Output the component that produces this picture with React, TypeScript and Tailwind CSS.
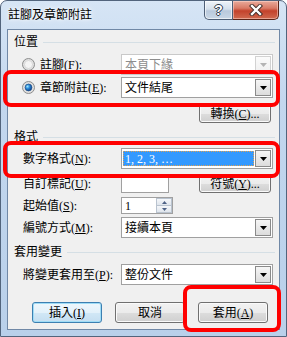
import React from "react";

function Radio({ checked }: { checked: boolean }) {
  return (
    <svg width="13" height="13" viewBox="0 0 13 13" className="shrink-0">
      <defs>
        <radialGradient id="rgOuter" cx="0.5" cy="0.5" r="0.5">
          <stop offset="0%" stopColor="#fcfcfc" />
          <stop offset="70%" stopColor="#e8e8e8" />
          <stop offset="100%" stopColor="#d4d4d4" />
        </radialGradient>
        <radialGradient id="rgDot" cx="0.35" cy="0.35" r="0.7">
          <stop offset="0%" stopColor="#9be7ff" />
          <stop offset="45%" stopColor="#2b8ad8" />
          <stop offset="100%" stopColor="#0b3f86" />
        </radialGradient>
      </defs>
      <circle cx="6.5" cy="6.5" r="6" fill="url(#rgOuter)" stroke="#8e8f8f" strokeWidth="1" />
      <circle cx="6.5" cy="6.5" r="4" fill="#f4f4f4" stroke="#c8c8c8" strokeWidth="0.6" />
      {checked && <circle cx="6.5" cy="6.5" r="3.4" fill="url(#rgDot)" stroke="#1b4a86" strokeWidth="0.7" />}
    </svg>
  );
}

function Arrow({ disabled }: { disabled?: boolean }) {
  return (
    <div
      className={
        "mr-[1px] my-[1px] flex w-[16px] shrink-0 items-center justify-center border " +
        (disabled
          ? "border-[#d2d2d2] bg-[linear-gradient(180deg,#fbfbfb,#f0f0f0)]"
          : "border-[#8a8a8a] bg-[linear-gradient(180deg,#f6f6f6_0%,#e9e9e9_50%,#dcdcdc_100%)]")
      }
    >
      <svg width="7" height="4" viewBox="0 0 7 4">
        <polygon points="0,0 7,0 3.5,4" fill={disabled ? "#b4b4b4" : "#000"} />
      </svg>
    </div>
  );
}

function Combo({
  text,
  disabled,
  selected,
}: {
  text: string;
  disabled?: boolean;
  selected?: boolean;
}) {
  return (
    <div
      className={
        "flex h-full w-[152px] items-stretch border bg-white " +
        (disabled ? "border-[#c9c9c9]" : "border-[#a0a0a0]")
      }
    >
      {selected ? (
        <div className="mx-[1px] my-[2px] flex flex-1 items-center border border-dotted border-[#e0a050] bg-[#3399ff] pl-[1px] text-white font-['Liberation_Serif','Noto_Sans_CJK_TC',serif]">
          {text}
        </div>
      ) : (
        <div
          className={
            "flex flex-1 items-center pl-[3px] " + (disabled ? "text-[#8d8d8d]" : "text-black")
          }
        >
          {text}
        </div>
      )}
      <Arrow disabled={disabled} />
    </div>
  );
}

function Btn({
  children,
  w,
  focused,
}: {
  children: React.ReactNode;
  w: string;
  focused?: boolean;
}) {
  return (
    <div
      className={
        "flex h-full items-center justify-center rounded-[3px] border " +
        w +
        " " +
        (focused
          ? "border-[#3c7fb1] bg-[linear-gradient(180deg,#eef7fc_0%,#e3f1fa_50%,#d2e8f6_50%,#c4def1_100%)] shadow-[inset_0_0_0_1px_#9fdcf6]"
          : "border-[#707070] bg-[linear-gradient(180deg,#f2f2f2_0%,#ebebeb_50%,#dddddd_50%,#cfcfcf_100%)] shadow-[inset_0_0_0_1px_#fafafa]")
      }
    >
      {children}
    </div>
  );
}

function Header({ text, mt }: { text: string; mt: string }) {
  return (
    <div className={"flex h-[15px] items-center pl-[6px] pr-[4px] " + mt}>
      <span className="leading-[15px]">{text}</span>
      <div className="ml-[5px] h-px flex-1 bg-[#d5dfe5]" />
    </div>
  );
}

const M = ({ c }: { c: string }) => (
  <>
    (<span className="underline underline-offset-[1px]">{c}</span>)
  </>
);

export default function App() {
  return (
    <div className="relative flex h-[337px] w-[287px] flex-col overflow-hidden rounded-t-[7px] border border-[#52647c] bg-[linear-gradient(180deg,#d6e5f5_0%,#c3d7ee_30%,#b9d0ea_100%)] text-[12px] text-black font-['Liberation_Serif','Noto_Sans_CJK_TC',serif]">
      {/* title bar */}
      <div className="flex h-[28px] shrink-0 items-start">
        <div className="mt-[6px] ml-[7px] leading-[16px] [text-shadow:0_0_6px_#ffffff,0_0_3px_#ffffff]">
          註腳及章節附註
        </div>
        <div className="flex-1" />
        <div className="mr-[7px] flex h-[19px]">
          <div className="flex w-[29px] items-center justify-center rounded-bl-[5px] border border-t-0 border-[#4d5e76] bg-[linear-gradient(180deg,#eef3f9_0%,#d5e0ec_45%,#b9c9dc_55%,#c9d7e6_100%)] shadow-[inset_0_0_0_1px_rgba(255,255,255,0.6)]">
            <span className="font-['Liberation_Sans',sans-serif] text-[14px] font-bold leading-none text-white [text-shadow:1px_0_#2f3b4b,-1px_0_#2f3b4b,0_1px_#2f3b4b,0_-1px_#2f3b4b]">
              ?
            </span>
          </div>
          <div className="flex w-[46px] items-center justify-center rounded-br-[5px] border border-t-0 border-l-0 border-[#5a2418] bg-[linear-gradient(180deg,#e9ab9c_0%,#d97a66_40%,#c3422b_55%,#d06a50_100%)] shadow-[inset_0_0_0_1px_rgba(255,220,210,0.5)]">
            <svg width="14" height="12" viewBox="0 0 14 12">
              <path d="M3 2 L11 10 M11 2 L3 10" stroke="#3d2a26" strokeWidth="4.2" strokeLinecap="square" />
              <path d="M3 2 L11 10 M11 2 L3 10" stroke="#ffffff" strokeWidth="2.4" strokeLinecap="square" />
            </svg>
          </div>
        </div>
      </div>

      {/* body */}
      <div className="flex flex-1 px-[6px] pb-[6px]">
        <div className="flex flex-1 flex-col border border-[#7088a6] bg-[#f0f0f0]">
          <Header text="位置" mt="mt-[5px]" />

          <div className="mt-[4px] flex h-[21px] items-center">
            <div className="ml-[14px] flex h-full w-[99px] items-center gap-[5px]">
              <Radio checked={false} />
              <span>
                註腳<M c="F" />:
              </span>
            </div>
            <Combo text="本頁下緣" disabled />
          </div>

          <div className="mt-[2px] flex h-[21px] items-center">
            <div className="ml-[14px] flex h-full w-[99px] items-center gap-[5px]">
              <Radio checked />
              <span>
                章節附註<M c="E" />:
              </span>
            </div>
            <Combo text="文件結尾" />
          </div>

          <div className="mt-[6px] flex h-[19px]">
            <div className="ml-[191px] flex h-full">
              <Btn w="w-[72px]">
                轉換<M c="C" />...
              </Btn>
            </div>
          </div>

          <Header text="格式" mt="mt-[7px]" />

          <div className="mt-[3px] flex h-[21px] items-center">
            <div className="ml-[15px] w-[98px]">
              數字格式<M c="N" />:
            </div>
            <Combo text="1, 2, 3, …" selected />
          </div>

          <div className="mt-[6px] flex h-[18px] items-center">
            <div className="ml-[15px] w-[98px]">
              自訂標記<M c="U" />:
            </div>
            <div className="h-full w-[48px] border border-[#a0a0a0] bg-white" />
            <div className="ml-[30px] flex h-full">
              <Btn w="w-[72px]">
                符號<M c="Y" />...
              </Btn>
            </div>
          </div>

          <div className="mt-[4px] flex h-[17px] items-center">
            <div className="ml-[15px] w-[98px]">
              起始值<M c="S" />:
            </div>
            <div className="flex h-full w-[52px] border border-[#a0a0a0] bg-white">
              <div className="flex flex-1 items-center pl-[3px]">1</div>
              <div className="flex w-[16px] flex-col">
                <div className="flex flex-1 items-center justify-center border border-[#b9c3cf] bg-[linear-gradient(180deg,#f5f7fa,#dfe5ec)]">
                  <svg width="5" height="3" viewBox="0 0 5 3">
                    <polygon points="0,3 5,3 2.5,0" fill="#4d6185" />
                  </svg>
                </div>
                <div className="flex flex-1 items-center justify-center border border-t-0 border-[#b9c3cf] bg-[linear-gradient(180deg,#f5f7fa,#dfe5ec)]">
                  <svg width="5" height="3" viewBox="0 0 5 3">
                    <polygon points="0,0 5,0 2.5,3" fill="#4d6185" />
                  </svg>
                </div>
              </div>
            </div>
          </div>

          <div className="mt-[3px] flex h-[21px] items-center">
            <div className="ml-[15px] w-[98px]">
              編號方式<M c="M" />:
            </div>
            <Combo text="接續本頁" />
          </div>

          <Header text="套用變更" mt="mt-[7px]" />

          <div className="mt-[4px] flex h-[21px] items-center">
            <div className="ml-[15px] w-[98px]">
              將變更套用至<M c="P" />:
            </div>
            <Combo text="整份文件" />
          </div>

          <div className="mt-[17px] flex h-[21px] gap-[13px] pl-[24px]">
            <Btn w="w-[70px]" focused>
              插入<M c="I" />
            </Btn>
            <Btn w="w-[70px]">取消</Btn>
            <Btn w="w-[70px]">
              套用<M c="A" />
            </Btn>
          </div>
        </div>
      </div>

      {/* red annotations */}
      <div className="pointer-events-none absolute left-[2px] top-[69px] h-[37px] w-[277px] rounded-[8px] border-[4px] border-[#ff0000]" />
      <div className="pointer-events-none absolute left-[2px] top-[140px] h-[37px] w-[277px] rounded-[8px] border-[4px] border-[#ff0000]" />
      <div className="pointer-events-none absolute left-[182px] top-[284px] h-[47px] w-[98px] rounded-[8px] border-[4px] border-[#ff0000]" />
    </div>
  );
}
